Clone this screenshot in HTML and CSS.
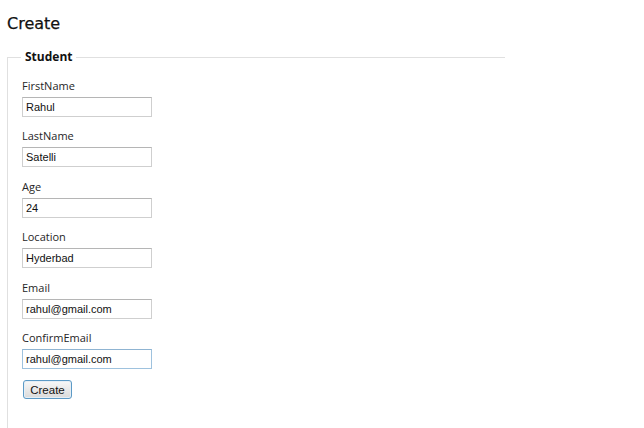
FILE: index.html
```html
<!DOCTYPE html>
<html>
<head>
<meta charset="utf-8">
<link rel="stylesheet" href="styles.css">
</head>
<body>
<h1 class="title">Create</h1>
<form class="form">
  <fieldset class="box">
    <legend class="legend">Student</legend>
    <div class="field">
      <label class="label">FirstName</label>
      <input class="input" type="text" value="Rahul">
    </div>
    <div class="field">
      <label class="label">LastName</label>
      <input class="input" type="text" value="Satelli">
    </div>
    <div class="field">
      <label class="label">Age</label>
      <input class="input" type="text" value="24">
    </div>
    <div class="field">
      <label class="label">Location</label>
      <input class="input" type="text" value="Hyderbad">
    </div>
    <div class="field">
      <label class="label">Email</label>
      <input class="input" type="text" value="rahul@gmail.com">
    </div>
    <div class="field">
      <label class="label">ConfirmEmail</label>
      <input class="input input-focus" type="text" value="rahul@gmail.com">
    </div>
    <div class="actions">
      <button class="btn" type="button">Create</button>
    </div>
  </fieldset>
</form>
</body>
</html>
```
FILE: styles.css
```css
html, body {
  margin: 0;
  padding: 0;
  background: #fff;
}
body {
  padding: 0 0 0 7px;
  font-family: "Open Sans", "DejaVu Sans", sans-serif;
  color: #222;
  overflow: hidden;
  height: 428px;
  box-sizing: border-box;
}
.title {
  margin: 0;
  padding-top: 13px;
  font-family: "DejaVu Sans", sans-serif;
  font-size: 16px;
  line-height: 22px;
  font-weight: normal;
  color: #111;
  -webkit-text-stroke: 0.25px #111;
}
.form {
  margin: 0;
}
.box {
  margin: 14px 0 0 0;
  width: 498px;
  height: 379px;
  padding: 13px 0 0 14px;
  border: 1px solid #e0e0e0;
  border-right: none;
  border-bottom: none;
  box-sizing: border-box;
}
.legend {
  margin-left: -1px;
  padding: 0 4px;
  font-size: 12px;
  font-weight: 700;
  line-height: 16px;
  color: #111;
}
.field {
  display: flex;
  flex-direction: column;
  align-items: flex-start;
  margin-bottom: 11.4px;
}
.label {
  font-size: 11px;
  line-height: 16px;
  color: #262626;
  margin-bottom: 3px;
}
.input {
  width: 130px;
  height: 20px;
  box-sizing: border-box;
  margin: 0;
  padding: 0 3px;
  border: 1px solid #cfcfcf;
  border-top-color: #b5b5b5;
  font-family: "Liberation Sans", Arial, sans-serif;
  font-size: 11px;
  color: #111;
  background: #fff;
  outline: none;
}
.input-focus {
  border-color: #9ec2de;
  border-top-color: #8fb4d2;
}
.actions {
  display: flex;
  padding: 0 0 0 1px;
}
.btn {
  width: 49px;
  height: 19px;
  padding: 0;
  border: 1px solid #5c9ac6;
  border-radius: 3px;
  background: linear-gradient(#f8f8f8, #dadada);
  box-shadow: inset 0 0 0 1px #e6eef5;
  font-family: "Liberation Sans", Arial, sans-serif;
  font-size: 11.5px;
  color: #111;
}
```
